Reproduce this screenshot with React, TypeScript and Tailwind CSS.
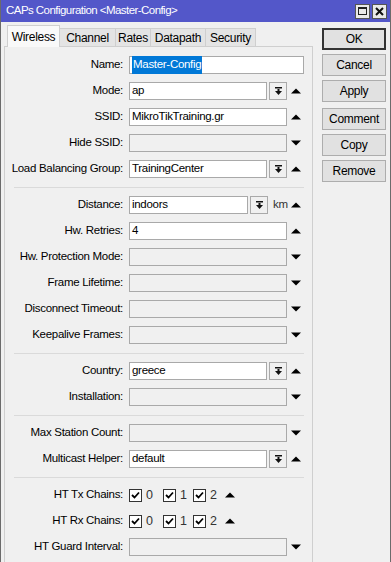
import React from "react";

type Field = {
  label: string;
  value?: string;
  kind: "text" | "select" | "name" | "distance" | "chains";
  arrow?: "up" | "down";
};

const groups: Field[][] = [
  [
    { label: "Name:", value: "Master-Config", kind: "name" },
    { label: "Mode:", value: "ap", kind: "select", arrow: "up" },
    { label: "SSID:", value: "MikroTikTraining.gr", kind: "text", arrow: "up" },
    { label: "Hide SSID:", kind: "text", arrow: "down" },
    { label: "Load Balancing Group:", value: "TrainingCenter", kind: "select", arrow: "up" },
  ],
  [
    { label: "Distance:", value: "indoors", kind: "distance", arrow: "up" },
    { label: "Hw. Retries:", value: "4", kind: "text", arrow: "up" },
    { label: "Hw. Protection Mode:", kind: "text", arrow: "down" },
    { label: "Frame Lifetime:", kind: "text", arrow: "down" },
    { label: "Disconnect Timeout:", kind: "text", arrow: "down" },
    { label: "Keepalive Frames:", kind: "text", arrow: "down" },
  ],
  [
    { label: "Country:", value: "greece", kind: "select", arrow: "up" },
    { label: "Installation:", kind: "text", arrow: "down" },
  ],
  [
    { label: "Max Station Count:", kind: "text", arrow: "down" },
    { label: "Multicast Helper:", value: "default", kind: "select", arrow: "up" },
  ],
  [
    { label: "HT Tx Chains:", kind: "chains" },
    { label: "HT Rx Chains:", kind: "chains" },
    { label: "HT Guard Interval:", kind: "text", arrow: "down" },
  ],
];

const tabs: [string, string][] = [
  ["Channel", "w-[56px]"],
  ["Rates", "w-[35px]"],
  ["Datapath", "w-[55px]"],
  ["Security", "w-[50px]"],
];

function Arrow({ dir }: { dir: "up" | "down" }) {
  return (
    <svg width="10" height="6" viewBox="0 0 10 6" className="shrink-0">
      {dir === "up" ? (
        <polygon points="0,5.5 5,0.5 10,5.5" fill="#000" />
      ) : (
        <polygon points="0,0.5 10,0.5 5,5.5" fill="#000" />
      )}
    </svg>
  );
}

function DropBtn() {
  return (
    <div className="ml-[2px] flex h-[18px] w-[18px] shrink-0 items-center justify-center border border-[#a9a9a9] bg-[#f0f0f0]">
      <svg width="9" height="10" viewBox="0 0 9 10">
        <rect x="1" y="1" width="7" height="1.5" fill="#111" />
        <rect x="3.5" y="3" width="2" height="2.5" fill="#111" />
        <polygon points="1,5 8,5 4.5,9" fill="#111" />
      </svg>
    </div>
  );
}

function Box({ value, w }: { value?: string; w: string }) {
  return (
    <div
      className={`flex h-[18px] ${w} shrink-0 items-center border border-[#a9a9a9] px-[2px] ${
        value !== undefined ? "bg-white" : "bg-[#f0f0f0]"
      }`}
    >
      {value}
    </div>
  );
}

function Check({ n }: { n: string }) {
  return (
    <div className="flex items-center">
      <div className="flex h-[13px] w-[13px] items-center justify-center border border-[#333] bg-white">
        <svg width="9" height="8" viewBox="0 0 9 8">
          <path d="M1 4 L3.5 6.5 L8 1.5" stroke="#000" strokeWidth="1.8" fill="none" />
        </svg>
      </div>
      <span className="ml-[4px] text-[12.5px] text-[#333]">{n}</span>
    </div>
  );
}

function Row({ f }: { f: Field }) {
  return (
    <div className="flex h-[26px] items-center">
      <div className="w-[118px] shrink-0 text-right text-[#000]">{f.label}</div>
      <div className="ml-[6px] flex items-center">
        {f.kind === "name" && (
          <div className="flex h-[18px] w-[175px] items-center border border-[#a9a9a9] bg-white px-[2px]">
            <span className="bg-[#0078d7] px-[1px] text-white">{f.value}</span>
          </div>
        )}
        {f.kind === "text" && <Box value={f.value} w="w-[158px]" />}
        {f.kind === "select" && (
          <>
            <Box value={f.value} w="w-[138px]" />
            <DropBtn />
          </>
        )}
        {f.kind === "distance" && (
          <>
            <Box value={f.value} w="w-[119px]" />
            <DropBtn />
            <span className="ml-[5px] w-[14px] text-[#333]">km</span>
          </>
        )}
        {f.kind === "chains" && (
          <div className="flex items-center">
            <div className="w-[34px]">
              <Check n="0" />
            </div>
            <div className="w-[30px]">
              <Check n="1" />
            </div>
            <Check n="2" />
            <div className="ml-[8px]">
              <Arrow dir="up" />
            </div>
          </div>
        )}
        {f.arrow && f.kind !== "chains" && (
          <div className="ml-[4px] flex w-[10px] items-center">
            <Arrow dir={f.arrow} />
          </div>
        )}
      </div>
    </div>
  );
}

const buttons = [["OK", "Cancel", "Apply"], ["Comment", "Copy", "Remove"]];

export default function App() {
  return (
    <div
      className="h-[562px] w-[391px] overflow-hidden border-x border-[#6b6b6b] bg-[#f0f0f0] text-[11.5px] tracking-[-0.3px] text-[#000]"
      style={{ fontFamily: '"Liberation Sans", Arial, sans-serif' }}
    >
      {/* title bar */}
      <div className="flex h-[22px] items-center bg-[#5357c9] pl-[5px] pr-[3px] text-[11.5px] tracking-[-0.55px] text-white">
        <span className="flex-1">CAPs Configuration &lt;Master-Config&gt;</span>
        <div className="flex gap-[2px]">
          <div className="flex h-[15px] w-[15px] items-center justify-center border border-[#555] bg-[#e9e9e9]">
            <div className="h-[8px] w-[9px] border border-[#222] border-t-2" />
          </div>
          <div className="flex h-[15px] w-[15px] items-center justify-center border border-[#555] bg-[#e9e9e9]">
            <svg width="9" height="9" viewBox="0 0 9 9">
              <path d="M1 1 L8 8 M8 1 L1 8" stroke="#111" strokeWidth="2" />
            </svg>
          </div>
        </div>
      </div>

      <div className="flex">
        {/* tabs + panel */}
        <div className="w-[312px] shrink-0 pl-[3px] pt-[3px]">
          <div className="flex items-end pl-[3px] text-[12px]">
            <div className="relative z-10 -mb-px flex h-[22px] w-[53px] items-center justify-center border border-b-0 border-[#cfcfcf] bg-[#f9f9f9]">
              Wireless
            </div>
            {tabs.map(([t, w]) => (
              <div
                key={t}
                className={`flex h-[18px] ${w} items-center justify-center border border-b-0 border-l-0 border-[#cfcfcf] bg-[#e4e4e4]`}
              >
                {t}
              </div>
            ))}
          </div>
          <div className="border-l border-r border-t border-[#cfcfcf] pb-[10px] pt-[5px]">
            {groups.map((g, gi) => (
              <div key={gi}>
                {gi > 0 && (
                  <div className="mx-[9px] mb-[4px] mt-[5px] h-px w-[290px] bg-[#dadada]" />
                )}
                {g.map((f) => (
                  <Row key={f.label} f={f} />
                ))}
              </div>
            ))}
          </div>
        </div>

        {/* buttons */}
        <div className="ml-[9px] flex flex-col gap-[6px] pt-[6px]">
          {buttons.map((col, ci) => (
            <div key={ci} className="flex flex-col gap-[4px]">
              {col.map((b) => (
                <div
                  key={b}
                  className={`flex h-[22px] w-[64px] items-center justify-center bg-[#e1e1e1] text-[12px] ${
                    b === "OK" ? "border-2 border-[#333]" : "border border-[#adadad]"
                  }`}
                >
                  {b}
                </div>
              ))}
            </div>
          ))}
        </div>
      </div>
    </div>
  );
}
